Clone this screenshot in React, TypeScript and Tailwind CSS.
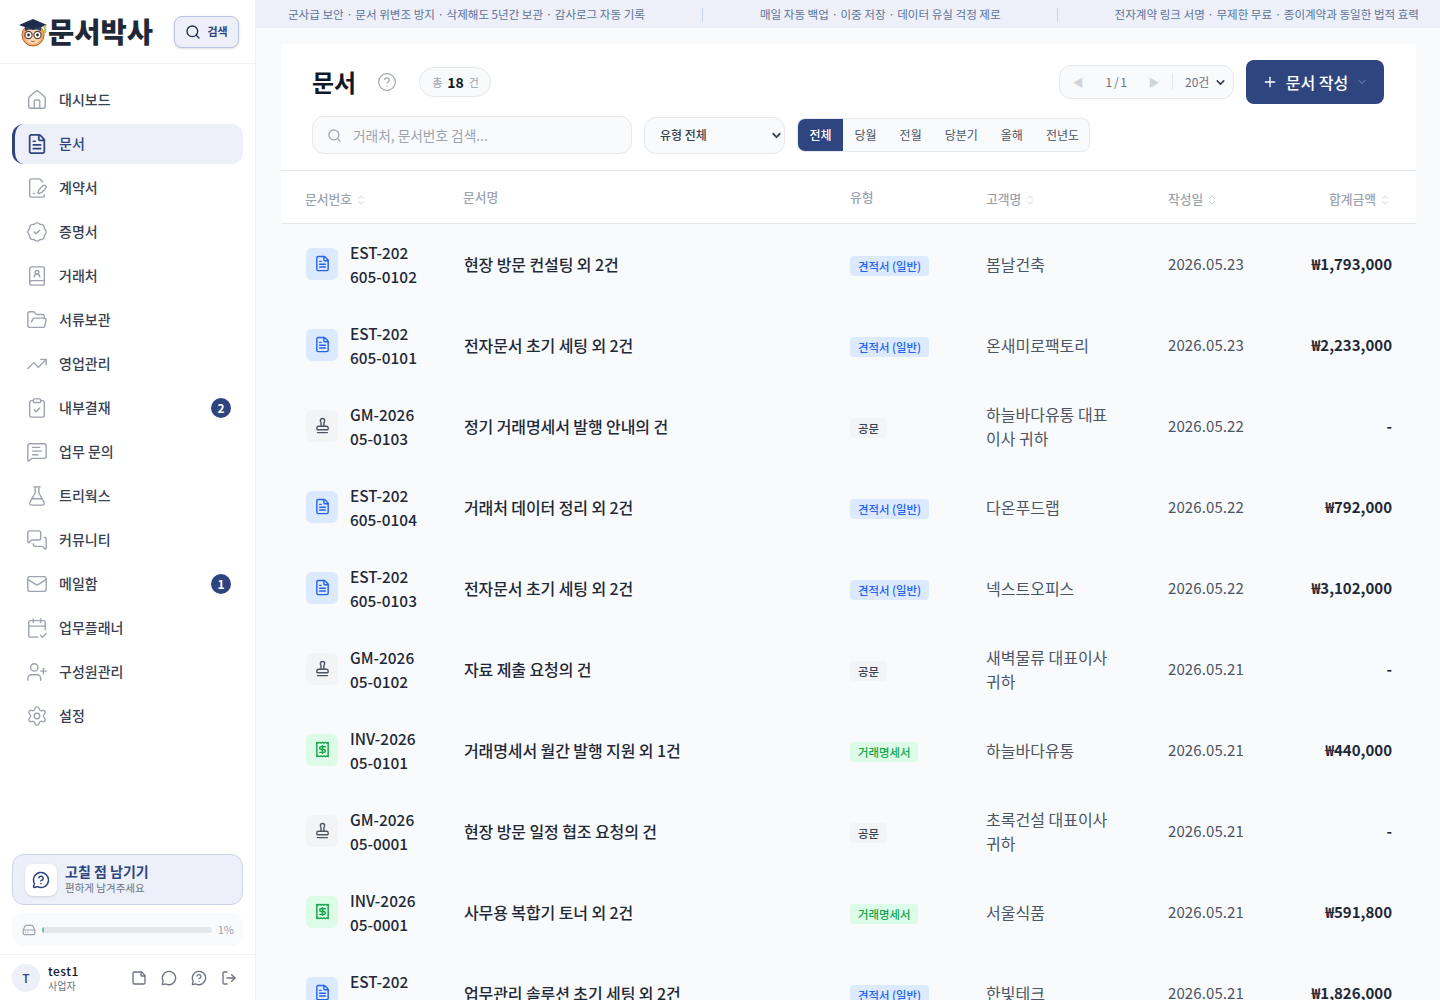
import {
  BadgeCheck,
  BookUser,
  CalendarCheck2,
  ChevronDown,
  ChevronsUpDown,
  CircleHelp,
  ClipboardCheck,
  FileSignature,
  FileText,
  FlaskConical,
  FolderOpen,
  HardDrive,
  House,
  LogOut,
  Mail,
  MessageCircle,
  MessageCircleQuestion,
  MessageSquareText,
  MessagesSquare,
  Plus,
  Receipt,
  Search,
  Settings,
  Stamp,
  StickyNote,
  TrendingUp,
  UserPlus,
} from "lucide-react";

const navItems = [
  { label: "대시보드", icon: House },
  { label: "문서", icon: FileText, active: true },
  { label: "계약서", icon: FileSignature },
  { label: "증명서", icon: BadgeCheck },
  { label: "거래처", icon: BookUser },
  { label: "서류보관", icon: FolderOpen },
  { label: "영업관리", icon: TrendingUp },
  { label: "내부결재", icon: ClipboardCheck, badge: 2 },
  { label: "업무 문의", icon: MessageSquareText },
  { label: "트리웍스", icon: FlaskConical },
  { label: "커뮤니티", icon: MessagesSquare },
  { label: "메일함", icon: Mail, badge: 1 },
  { label: "업무플래너", icon: CalendarCheck2 },
  { label: "구성원관리", icon: UserPlus },
  { label: "설정", icon: Settings },
];

type DocType = "est" | "gm" | "inv";

const typeStyles = {
  est: {
    label: "견적서 (일반)",
    icon: FileText,
    box: "bg-[#dbeafe] text-[#2563eb]",
    badge: "bg-[#dbeafe] text-[#2563eb]",
  },
  gm: {
    label: "공문",
    icon: Stamp,
    box: "bg-[#f3f4f6] text-[#4b5563]",
    badge: "bg-[#f3f4f6] text-[#374151]",
  },
  inv: {
    label: "거래명세서",
    icon: Receipt,
    box: "bg-[#dcfce7] text-[#16a34a]",
    badge: "bg-[#dcfce7] text-[#16a34a]",
  },
};

const docs: { no: string[]; title: string; type: DocType; client: string; date: string; amount: string }[] = [
  { no: ["EST-202", "605-0102"], title: "현장 방문 컨설팅 외 2건", type: "est", client: "봄날건축", date: "2026.05.23", amount: "₩1,793,000" },
  { no: ["EST-202", "605-0101"], title: "전자문서 초기 세팅 외 2건", type: "est", client: "온새미로팩토리", date: "2026.05.23", amount: "₩2,233,000" },
  { no: ["GM-2026", "05-0103"], title: "정기 거래명세서 발행 안내의 건", type: "gm", client: "하늘바다유통 대표이사 귀하", date: "2026.05.22", amount: "-" },
  { no: ["EST-202", "605-0104"], title: "거래처 데이터 정리 외 2건", type: "est", client: "다온푸드랩", date: "2026.05.22", amount: "₩792,000" },
  { no: ["EST-202", "605-0103"], title: "전자문서 초기 세팅 외 2건", type: "est", client: "넥스트오피스", date: "2026.05.22", amount: "₩3,102,000" },
  { no: ["GM-2026", "05-0102"], title: "자료 제출 요청의 건", type: "gm", client: "새벽물류 대표이사 귀하", date: "2026.05.21", amount: "-" },
  { no: ["INV-2026", "05-0101"], title: "거래명세서 월간 발행 지원 외 1건", type: "inv", client: "하늘바다유통", date: "2026.05.21", amount: "₩440,000" },
  { no: ["GM-2026", "05-0001"], title: "현장 방문 일정 협조 요청의 건", type: "gm", client: "초록건설 대표이사 귀하", date: "2026.05.21", amount: "-" },
  { no: ["INV-2026", "05-0001"], title: "사무용 복합기 토너 외 2건", type: "inv", client: "서울식품", date: "2026.05.21", amount: "₩591,800" },
  { no: ["EST-202", "605-0105"], title: "업무관리 솔루션 초기 세팅 외 2건", type: "est", client: "한빛테크", date: "2026.05.21", amount: "₩1,826,000" },
];

const periods = ["전체", "당월", "전월", "당분기", "올해", "전년도"];

function Logo() {
  return (
    <svg width="30" height="30" viewBox="0 0 30 30" className="shrink-0">
      <circle cx="15" cy="18" r="11" fill="#f0a868" stroke="#b8672e" strokeWidth="1" />
      <circle cx="15" cy="19" r="8" fill="#fbd9b5" />
      <path d="M1 8 L15 2 L29 8 L15 13 Z" fill="#1f2d4d" />
      <path d="M7 10 L7 14 Q15 10 23 14 L23 10 L15 13 Z" fill="#2b3b63" />
      <path d="M27 8 L27 14" stroke="#a3b13c" strokeWidth="1.5" />
      <circle cx="27" cy="15" r="1.4" fill="#c3cc4b" />
      <circle cx="10.5" cy="18" r="3.6" fill="#fff" stroke="#5b4636" strokeWidth="1.2" />
      <circle cx="19.5" cy="18" r="3.6" fill="#fff" stroke="#5b4636" strokeWidth="1.2" />
      <circle cx="10.5" cy="18" r="1.4" fill="#2b2b2b" />
      <circle cx="19.5" cy="18" r="1.4" fill="#2b2b2b" />
      <path d="M13 24 Q15 25.5 17 24" stroke="#b8672e" strokeWidth="1" fill="none" />
    </svg>
  );
}

function Sidebar() {
  return (
    <aside className="flex h-screen w-[256px] shrink-0 flex-col border-r border-[#eef0f3] bg-white">
      <div className="flex h-[64px] shrink-0 items-center justify-between border-b border-[#f0f1f4] pl-[18px] pr-[16px]">
        <div className="flex items-center">
          <Logo />
          <span className="text-[28.5px] font-black leading-none text-[#1f2937]">문서박사</span>
        </div>
        <button className="flex h-[32px] w-[65px] shrink-0 items-center justify-center gap-[6px] rounded-lg border border-[#b9c4e2] bg-[#edf0f8] text-[11px] font-bold text-[#2f4580] shadow-sm">
          <Search size={16} className="text-[#1f2d4d]" />
          검색
        </button>
      </div>
      <nav className="flex flex-col gap-[4px] px-[12px] pt-[16px]">
        {navItems.map((item) => {
          const Icon = item.icon;
          return (
            <div
              key={item.label}
              className={
                item.active
                  ? "flex h-[40px] items-center rounded-xl border-l-[3px] border-[#2f4580] bg-[#edf0f8] pl-[11px] pr-[12px] text-[#2f4580]"
                  : "flex h-[40px] items-center rounded-xl pl-[14px] pr-[12px] text-[#374151]"
              }
            >
              <Icon size={22} strokeWidth={item.active ? 1.9 : 1.5} className={item.active ? "text-[#2f4580]" : "text-[#9ca3af]"} />
              <span className="ml-[11px] flex-1 pb-[1px] text-[14px] font-medium">{item.label}</span>
              {item.badge && (
                <span className="flex h-[20px] w-[20px] items-center justify-center rounded-full bg-[#2f4580] text-[12px] font-bold text-white">
                  {item.badge}
                </span>
              )}
            </div>
          );
        })}
      </nav>
      <div className="mt-auto flex flex-col gap-[8px] px-[12px] pb-[8px]">
        <div className="flex h-[51px] items-center gap-[8px] rounded-xl border border-[#ccd4e8] bg-[#edf0f8] pl-[12px]">
          <div className="flex h-[32px] w-[32px] items-center justify-center rounded-lg bg-white shadow-sm">
            <MessageCircleQuestion size={18} className="text-[#2f4580]" />
          </div>
          <div className="flex flex-col pb-[2px]">
            <span className="text-[14px] font-bold leading-[17px] text-[#2f4580]">고칠 점 남기기</span>
            <span className="text-[10.5px] leading-[15px] text-[#6b7280]">편하게 남겨주세요</span>
          </div>
        </div>
        <div className="flex h-[33px] items-center rounded-xl bg-[#f9fafb] pl-[10px] pr-[9px]">
          <HardDrive size={14} className="text-[#9ca3af]" />
          <div className="ml-[6px] h-[6px] flex-1 overflow-hidden rounded-full bg-[#e5e7eb]">
            <div className="h-full w-[2px] bg-[#6fbf9f]" />
          </div>
          <span className="ml-[6px] text-[11px] text-[#9ca3af]">1%</span>
        </div>
      </div>
      <div className="flex h-[46px] shrink-0 items-center border-t border-[#f0f1f4] pl-[12px] pr-[18px]">
        <div className="flex h-[28px] w-[28px] items-center justify-center rounded-full bg-[#edf0f8] text-[12px] font-medium text-[#2f4580]">T</div>
        <div className="ml-[8px] flex flex-1 flex-col pt-[1px]">
          <span className="text-[12px] font-medium leading-[14px] tracking-[0.5px] text-[#111827]">test1</span>
          <span className="text-[10px] leading-[15px] text-[#6b7280]">사업자</span>
        </div>
        <div className="flex items-center gap-[14px] text-[#6b7280]">
          <StickyNote size={16} />
          <MessageCircle size={16} />
          <MessageCircleQuestion size={16} />
          <LogOut size={16} />
        </div>
      </div>
    </aside>
  );
}

function Banner() {
  return (
    <div className="flex h-[28px] shrink-0 items-center bg-[#edf0f8] pl-[32px] pr-[21px] pt-[1px] text-[11.56px] text-[#5b7299]">
      <span>군사급 보안 · 문서 위변조 방지 · 삭제해도 5년간 보관 · 감사로그 자동 기록</span>
      <span className="ml-[57px] h-[14px] w-px bg-[#c9d3e6]" />
      <span className="ml-[57px]">매일 자동 백업 · 이중 저장 · 데이터 유실 걱정 제로</span>
      <span className="ml-[56px] h-[14px] w-px bg-[#c9d3e6]" />
      <span className="ml-auto">전자계약 링크 서명 · 무제한 무료 · 종이계약과 동일한 법적 효력</span>
    </div>
  );
}

function Toolbar() {
  return (
    <div className="border-b border-[#e5e7eb] bg-white pb-[16px] pl-[31px] pr-[32px] pt-[16px]">
      <div className="flex h-[44px] items-center">
        <h1 className="text-[24px] font-bold text-[#111827]">문서</h1>
        <CircleHelp size={20} strokeWidth={1.4} className="ml-[21px] text-[#9ca3af]" />
        <div className="ml-[22px] flex h-[30px] w-[72px] items-center gap-[5px] rounded-full border border-[#e5e7eb] bg-[#f9fafb] pl-[12px] text-[11px] text-[#9ca3af]">
          총 <span className="text-[14px] font-bold text-[#111827]">18</span> 건
        </div>
        <div className="ml-auto flex items-center gap-[12px]">
          <div className="flex h-[34px] w-[175px] items-center whitespace-nowrap rounded-xl border border-[#e5e7eb] bg-[#f9fafb] pl-[8px] text-[#6b7280]">
            <span className="w-[20px] shrink-0 text-center text-[11px] text-[#d1d5db]">◀</span>
            <span className="ml-[17px] w-[22px] shrink-0 text-center text-[12px] tracking-[-0.5px]">1 / 1</span>
            <span className="ml-[17px] w-[20px] shrink-0 text-center text-[11px] text-[#d1d5db]">▶</span>
            <span className="ml-[8px] h-[16px] w-px shrink-0 bg-[#e5e7eb]" />
            <span className="ml-[12px] w-[24px] shrink-0 text-[12px]">20건</span>
            <ChevronDown size={13} strokeWidth={3} className="ml-[5px] shrink-0 text-[#374151]" />
          </div>
          <button className="flex h-[44px] w-[138px] items-center justify-center gap-[8px] rounded-lg bg-[#2f4580] text-[16px] font-medium text-white">
            <Plus size={16} />
            문서 작성
            <ChevronDown size={12} className="text-[#7f8fb5]" />
          </button>
        </div>
      </div>
      <div className="mt-[12px] flex items-center">
        <div className="flex h-[38px] w-[320px] items-center rounded-xl border border-[#e5e7eb] bg-[#f9fafb] pl-[14px]">
          <Search size={15} className="text-[#9ca3af]" />
          <span className="ml-[11px] text-[13.7px] text-[#9ca3af]">거래처, 문서번호 검색...</span>
        </div>
        <div className="ml-[12px] flex h-[37px] w-[141px] items-center justify-between rounded-xl border border-[#e5e7eb] bg-[#f9fafb] pl-[15px] pr-[1px] text-[12px] font-medium text-[#374151]">
          유형 전체
          <ChevronDown size={13} strokeWidth={3.5} className="text-[#374151]" />
        </div>
        <div className="ml-[12px] flex h-[34px] w-[293px] items-center overflow-hidden whitespace-nowrap rounded-lg border border-[#e5e7eb] bg-[#f9fafb] text-[12px] text-[#4b5563]">
          {periods.map((p, i) =>
            i === 0 ? (
              <span key={p} className="flex h-full w-[45px] shrink-0 items-center justify-center bg-[#2f4580] font-medium text-white">
                {p}
              </span>
            ) : (
              <span key={p} className="shrink-0 px-[11.5px]">
                {p}
              </span>
            ),
          )}
        </div>
      </div>
    </div>
  );
}

function SortIcon() {
  return <ChevronsUpDown size={12} className="ml-[3px] inline-block text-[#d1d5db]" />;
}

function DocTable() {
  return (
    <table className="w-full table-fixed border-collapse">
      <colgroup>
        <col className="w-[159px]" />
        <col className="w-[386px]" />
        <col className="w-[136px]" />
        <col className="w-[182px]" />
        <col className="w-[120px]" />
        <col className="w-[152px]" />
      </colgroup>
      <thead>
        <tr className="h-[52px] border-b border-[#e5e7eb] bg-white text-left text-[12.8px] font-medium text-[#9ca3af]">
          <th className="pl-[24px] pt-[3px] font-medium">문서번호<SortIcon /></th>
          <th className="pb-[1px] pl-[23px] font-medium">문서명</th>
          <th className="pb-[1px] pl-[24px] font-medium">유형</th>
          <th className="pl-[24px] pt-[3px] font-medium">고객명<SortIcon /></th>
          <th className="pl-[24px] pt-[3px] font-medium">작성일<SortIcon /></th>
          <th className="pr-[25px] pt-[3px] text-right font-medium">합계금액<SortIcon /></th>
        </tr>
      </thead>
      <tbody>
        {docs.map((doc) => {
          const style = typeStyles[doc.type];
          const Icon = style.icon;
          return (
            <tr key={doc.no.join("")} className="h-[81px]">
              <td className="pl-[25px]">
                <div className="flex items-center gap-[12px]">
                  <div className={`flex h-[32px] w-[32px] shrink-0 items-center justify-center rounded-md ${style.box}`}>
                    <Icon size={17} />
                  </div>
                  <div className="text-[15.4px] font-medium leading-[24px] text-[#1f2937]">
                    {doc.no[0]}
                    <br />
                    {doc.no[1]}
                  </div>
                </div>
              </td>
              <td className="pl-[24px] text-[16px] font-medium tracking-[-0.1px] text-[#1f2937]">{doc.title}</td>
              <td className="pl-[24px]">
                <span className={`inline-block h-[20px] rounded px-[8px] text-[11.4px] font-medium leading-[20px] ${style.badge}`}>{style.label}</span>
              </td>
              <td className="px-[24px] text-[16px] leading-[24px] text-[#4b5563]">{doc.client}</td>
              <td className="pl-[24px] pt-[1px] text-[15px] tracking-[0.1px] text-[#4b5563]">{doc.date}</td>
              <td className="pr-[24px] pt-[1px] text-right text-[15px] font-bold text-[#1f2937]">{doc.amount}</td>
            </tr>
          );
        })}
      </tbody>
    </table>
  );
}

export default function App() {
  return (
    <div className="flex h-screen overflow-hidden bg-[#f9fafb] font-['Noto_Sans_CJK_KR','Noto_Sans',sans-serif]">
      <Sidebar />
      <main className="flex min-w-0 flex-1 flex-col overflow-hidden">
        <Banner />
        <div className="pl-[25px] pr-[24px] pt-[16px]">
          <Toolbar />
          <DocTable />
        </div>
      </main>
    </div>
  );
}
